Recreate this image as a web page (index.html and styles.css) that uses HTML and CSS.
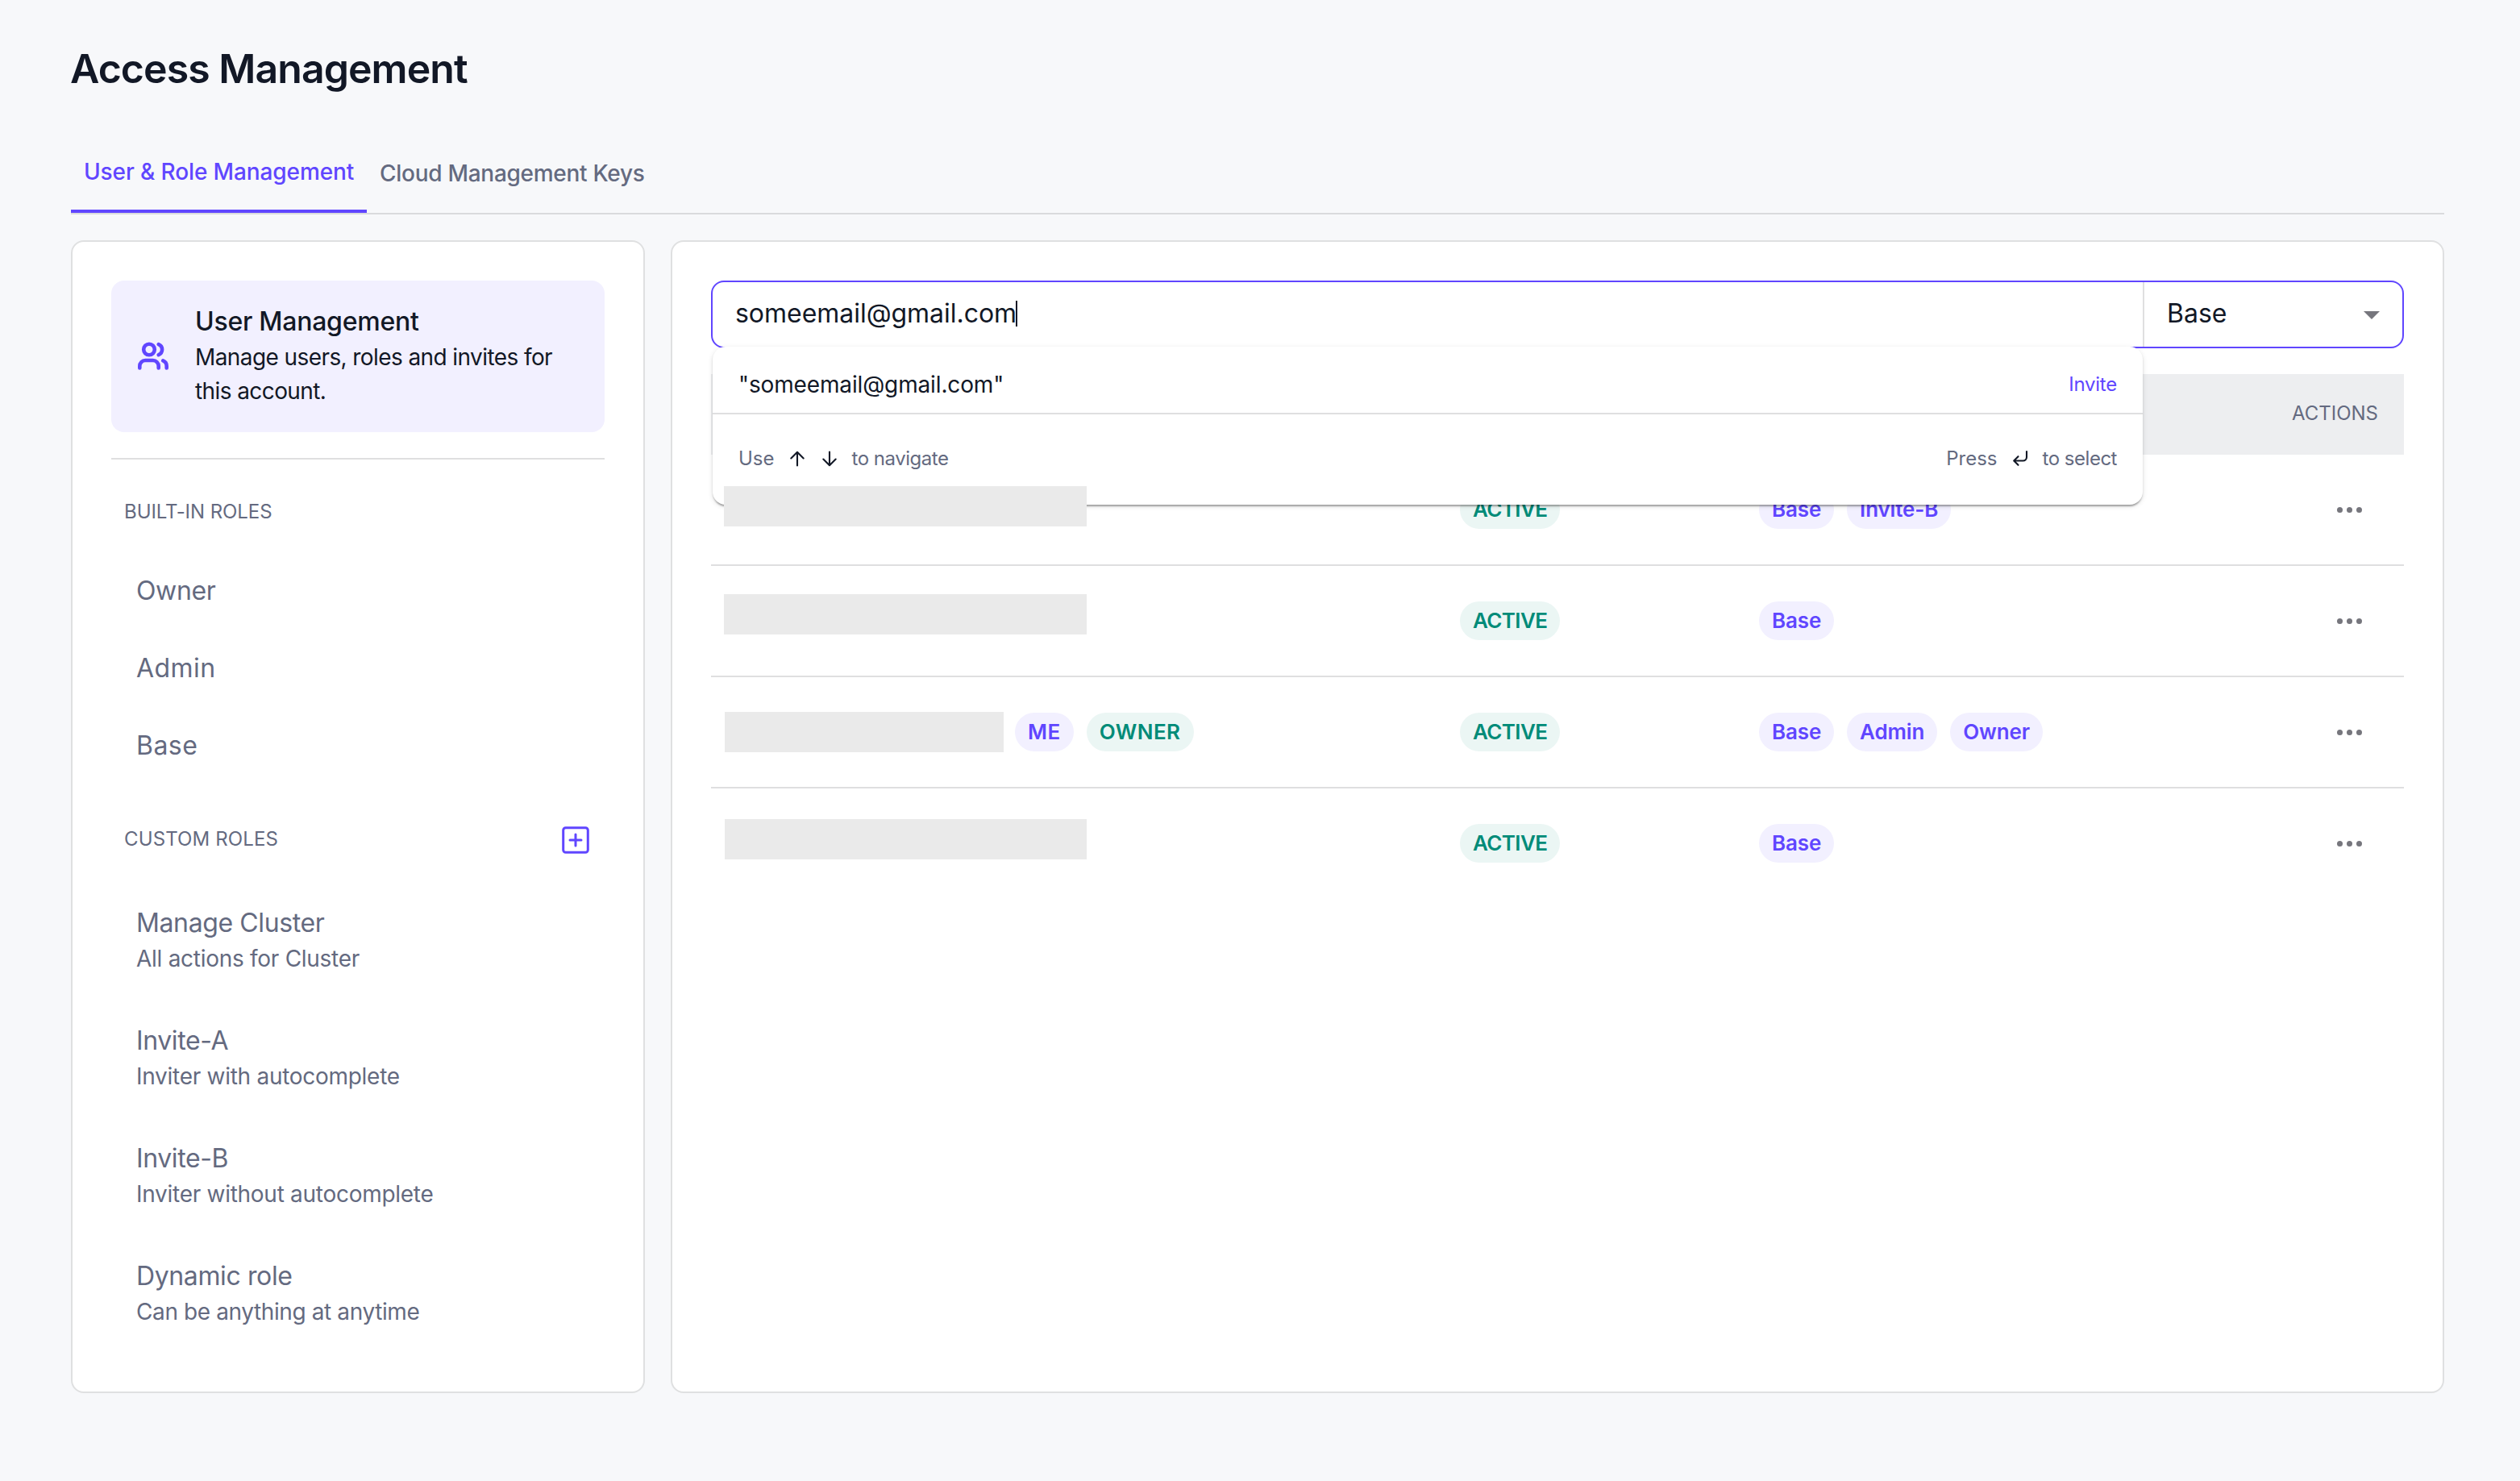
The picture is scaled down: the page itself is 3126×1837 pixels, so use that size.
FILE: index.html
```html
<!DOCTYPE html>
<html lang="en">
<head>
  <meta charset="utf-8">
  <title>Access Management</title>
  <link rel="stylesheet" href="styles.css">
</head>
<body>
  <h1>Access Management</h1>

  <nav class="tabs">
    <a class="tab active">User &amp; Role Management</a>
    <a class="tab">Cloud Management Keys</a>
  </nav>

  <main class="panels">
    <aside class="panel sidebar">
      <div class="user-card">
        <svg class="users-icon" viewBox="0 0 40 40">
          <circle cx="15" cy="11.5" r="6.8"/>
          <path d="M3.3 34.5V32a7 7 0 0 1 7-7h9.4a7 7 0 0 1 7 7v2.5"/>
          <path d="M26.7 5.1a7 7 0 0 1 0 13"/>
          <path d="M32.2 25.4a7.2 7.2 0 0 1 4.5 6.6v2.5"/>
        </svg>
        <div>
          <h2>User Management</h2>
          <p>Manage users, roles and invites for<br>this account.</p>
        </div>
      </div>

      <div class="roles-header builtin">BUILT-IN ROLES</div>
      <ul class="roles">
        <li>Owner</li>
        <li class="wide">Admin</li>
        <li class="wide">Base</li>
      </ul>

      <div class="roles-header custom">
        <span>CUSTOM ROLES</span>
        <svg class="add-icon" viewBox="0 0 36 36">
          <rect x="2.7" y="2.7" width="30.6" height="30.6" rx="3"/>
          <path d="M18 11v14M11 18h14"/>
        </svg>
      </div>
      <ul class="roles custom-roles">
        <li>Manage Cluster<small>All actions for Cluster</small></li>
        <li>Invite-A<small>Inviter with autocomplete</small></li>
        <li>Invite-B<small>Inviter without autocomplete</small></li>
        <li>Dynamic role<small class="tight">Can be anything at anytime</small></li>
      </ul>
    </aside>

    <section class="panel content">
      <div class="search">
        <div class="search-field">someemail@gmail.com<span class="caret"></span></div>
        <div class="role-select">
          Base
          <span class="arrow"></span>
        </div>

        <div class="dropdown">
          <div class="option">
            <span>"someemail@gmail.com"</span>
            <span class="invite">Invite</span>
          </div>
          <div class="hints">
            <div class="hint">
              <span>Use</span>
              <svg viewBox="0 0 24 24"><path d="M12 20.5V4M4.3 11.5L12 3.8l7.7 7.7"/></svg>
              <svg viewBox="0 0 24 24"><path d="M12 3.5V20M4.3 12.5l7.7 7.7 7.7-7.7"/></svg>
              <span class="tight">to navigate</span>
            </div>
            <div class="hint">
              <span>Press</span>
              <svg viewBox="0 0 24 24"><path d="M20 3v7a4.5 4.5 0 0 1-4.5 4.5H4.5M9.5 9.2L4.2 14.5l5.3 5.3"/></svg>
              <span class="tight">to select</span>
            </div>
          </div>
        </div>
      </div>

      <div class="table">
        <div class="table-head">ACTIONS</div>

        <div class="row">
          <div class="user"><span class="masked first"></span></div>
          <div class="tags"><span class="tag green">ACTIVE</span></div>
          <div class="tags"><span class="tag">Base</span><span class="tag">Invite-B</span></div>
          <div class="dots"><i></i><i></i><i></i></div>
        </div>

        <div class="row">
          <div class="user"><span class="masked second"></span></div>
          <div class="tags"><span class="tag green">ACTIVE</span></div>
          <div class="tags"><span class="tag">Base</span></div>
          <div class="dots"><i></i><i></i><i></i></div>
        </div>

        <div class="row">
          <div class="user"><span class="masked short"></span><span class="tag spaced">ME</span><span class="tag green spaced">OWNER</span></div>
          <div class="tags"><span class="tag green">ACTIVE</span></div>
          <div class="tags"><span class="tag">Base</span><span class="tag">Admin</span><span class="tag">Owner</span></div>
          <div class="dots"><i></i><i></i><i></i></div>
        </div>

        <div class="row">
          <div class="user"><span class="masked last"></span></div>
          <div class="tags"><span class="tag green">ACTIVE</span></div>
          <div class="tags"><span class="tag">Base</span></div>
          <div class="dots"><i></i><i></i><i></i></div>
        </div>
      </div>
    </section>
  </main>
</body>
</html>
```

FILE: styles.css
```css
* {
  box-sizing: border-box;
}

body {
  margin: 0;
  padding: 55px 94px 0 88px;
  font-family: Inter, "Liberation Sans", sans-serif;
  background-color: #f7f8fa;
  color: #121826;
}

h1, h2, p, ul {
  margin: 0;
  padding: 0;
}

svg {
  flex: none;
  fill: none;
  stroke: currentColor;
  stroke-linecap: round;
  stroke-linejoin: round;
}

h1 {
  margin-left: -1px;
  font-size: 50px;
  line-height: 60px;
  font-weight: 600;
  letter-spacing: -0.019em;
}

.tabs {
  display: flex;
  margin-top: 77px;
  border-bottom: 2px solid #dadbdd;
}

.tab {
  margin-top: 2px;
  padding: 0 16px;
  font-size: 28px;
  line-height: 42px;
  font-weight: 500;
  letter-spacing: -0.01em;
  white-space: nowrap;
  color: #646a80;
}

.tab.active {
  width: 367px;
  margin-top: 0;
  padding-bottom: 26px;
  border-bottom: 4px solid #6046ff;
  letter-spacing: -0.004em;
  color: #6046ff;
}

.panels {
  display: flex;
  gap: 32px;
  margin-top: 32px;
  height: 1430px;
}

.panel {
  padding: 48px;
  background-color: #fff;
  border: 2px solid #dfe0e1;
  border-radius: 16px;
}

.sidebar {
  width: 712px;
  flex: none;
}

.content {
  width: 2200px;
}

/* sidebar */
.user-card {
  display: flex;
  align-items: center;
  gap: 32px;
  height: 188px;
  padding: 28px 32px 30px;
  border-radius: 16px;
  background-color: #f2f0ff;
}

.users-icon {
  width: 40px;
  height: 40px;
  margin-top: 2px;
  color: #6046ff;
  stroke-width: 4.6;
}

.user-card h2 {
  font-size: 32px;
  line-height: 46px;
  font-weight: 500;
  letter-spacing: -0.008em;
}

.user-card p {
  font-size: 28px;
  line-height: 42px;
  letter-spacing: -0.021em;
}

.roles-header {
  padding: 0 18px 0 16px;
  font-size: 24px;
  line-height: 36px;
  letter-spacing: -0.003em;
  color: #646a80;
}

.builtin {
  margin-top: 32px;
  padding-top: 47px;
  border-top: 2px solid #dfdfe0;
}

.custom {
  display: flex;
  align-items: center;
  justify-content: space-between;
  height: 48px;
  margin-top: 45px;
  letter-spacing: 0.005em;
}

.custom span {
  margin-bottom: 2px;
}

.add-icon {
  width: 36px;
  height: 36px;
  color: #6046ff;
  stroke-width: 3;
}

.roles {
  margin-top: 32px;
  list-style: none;
  color: #646a80;
}

.roles li {
  padding: 24px 31px;
  font-size: 32px;
  line-height: 48px;
  letter-spacing: -0.012em;
}

.roles li.wide {
  letter-spacing: 0.014em;
}

.custom-roles {
  margin-top: 27px;
}

.custom-roles li {
  padding: 29px 31px;
  line-height: 46px;
}

.roles small {
  display: block;
  font-size: 28px;
  line-height: 42px;
  letter-spacing: -0.01em;
}

/* invite search */
.search {
  position: relative;
  display: flex;
  height: 84px;
  border: 2px solid #6046ff;
  border-radius: 16px;
  font-size: 32px;
}

.search-field {
  display: flex;
  align-items: center;
  width: 1774px;
  padding: 0 28px 3px;
  letter-spacing: -0.001em;
}

.caret {
  width: 2px;
  height: 32px;
  margin-left: -1px;
  background-color: #121826;
}

.role-select {
  display: flex;
  flex: 1;
  align-items: center;
  justify-content: space-between;
  padding: 0 28px 3px;
  border-left: 2px solid #dfdfe0;
}

.arrow {
  margin-top: 5px;
  border: 10px solid transparent;
  border-top-color: #76767d;
  border-bottom: 0;
}

.dropdown {
  position: absolute;
  top: 80px;
  left: 0;
  z-index: 1;
  width: 1774px;
  height: 196px;
  background-color: #fff;
  border-radius: 16px;
  box-shadow: 0 4px 2px -2px rgba(0, 0, 0, 0.2), 0 2px 2px 0 rgba(0, 0, 0, 0.14), 0 2px 6px 0 rgba(0, 0, 0, 0.12);
}

.option {
  display: flex;
  align-items: center;
  justify-content: space-between;
  height: 84px;
  padding: 11px 32px 0;
  border-bottom: 2px solid #dfdfe0;
  font-size: 28px;
  letter-spacing: -0.005em;
}

.invite {
  font-size: 24px;
  letter-spacing: -0.01em;
  color: #6046ff;
}

.hints {
  display: flex;
  justify-content: space-between;
  height: 112px;
  padding: 0 32px 3px;
  font-size: 24px;
  color: #646a80;
}

.hint {
  display: flex;
  align-items: center;
  gap: 16px;
}

.hint svg {
  width: 24px;
  height: 24px;
  color: #121826;
  stroke-width: 2.1;
}

.tight,
.roles small.tight {
  letter-spacing: -0.02em;
}

.roles small.tight {
  letter-spacing: -0.014em;
}

/* users table */
.table {
  margin-top: 32px;
}

.table-head {
  height: 100px;
  padding: 0 32px;
  font-size: 24px;
  line-height: 97px;
  text-align: right;
  background-color: #edeef0;
  color: #646a80;
}

.row {
  display: grid;
  grid-template-columns: 929px 371px 1fr 136px;
  align-items: center;
  height: 138px;
  border-bottom: 2px solid #dfdfe0;
}

.row:last-child {
  border-bottom: none;
  height: 136px;
}

.user {
  display: flex;
  align-items: center;
  padding-left: 16px;
}

.user .tag + .tag {
  margin-left: 16px;
}

/* hidden email addresses */
.masked {
  width: 450px;
  height: 50px;
  background-color: #eaeaea;
}

.masked.first {
  position: relative;
  z-index: 2;
  margin-bottom: 8px;
}

.masked.second {
  margin-bottom: 16px;
}

.masked.short {
  width: 346px;
  margin: 0 14px 0 1px;
}

.masked.last {
  width: 449px;
  margin: 0 0 11px 1px;
}

.tags {
  display: flex;
  gap: 16px;
}

.tag {
  height: 48px;
  padding: 0 16px;
  border-radius: 24px;
  font-size: 26px;
  line-height: 48px;
  font-weight: 600;
  letter-spacing: -0.006em;
  background-color: #f2f0ff;
  color: #6046ff;
}

.tag.green {
  background-color: #ebf6f4;
  color: #008b78;
  letter-spacing: -0.024em;
}

.tag.spaced {
  letter-spacing: 0.018em;
}

.dots {
  display: flex;
  justify-content: center;
  gap: 5px;
}

.dots i {
  width: 7px;
  height: 7px;
  border-radius: 50%;
  background-color: #76767d;
}
```
